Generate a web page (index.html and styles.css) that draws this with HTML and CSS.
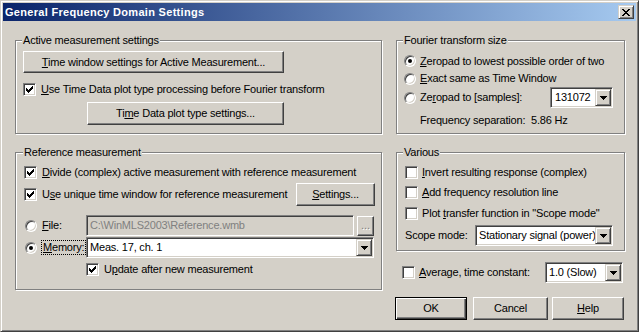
FILE: index.html
```html
<!DOCTYPE html>
<html>
<head>
<meta charset="utf-8">
<link rel="stylesheet" href="styles.css">
</head>
<body>
<div class="window">
  <div class="titlebar">
    <span class="title">General Frequency Domain Settings</span>
    <span class="close"><svg width="8" height="7" viewBox="0 0 8 7" shape-rendering="crispEdges"><path d="M0 0h2v1h-2z M6 0h2v1h-2z M1 1h2v1h-2z M5 1h2v1h-2z M2 2h4v1h-4z M3 3h2v1h-2z M2 4h4v1h-4z M1 5h2v1h-2z M5 5h2v1h-2z M0 6h2v1h-2z M6 6h2v1h-2z" fill="#000"/></svg></span>
  </div>
  <div class="content">
    <div class="col col-left">
      <div class="group g-active">
        <span class="legend">Active measurement settings</span>
        <div class="btn b-timewin"><span><u>T</u>ime window settings for Active Measurement...</span></div>
        <div class="row r13 r-usetime">
          <span class="cb"><svg width="7" height="7" viewBox="0 0 7 7" shape-rendering="crispEdges"><path d="M0 2h1v3h-1z M1 3h1v3h-1z M2 4h1v3h-1z M3 3h1v3h-1z M4 2h1v3h-1z M5 1h1v3h-1z M6 0h1v3h-1z" fill="#000"/></svg></span>
          <span class="txt"><u>U</u>se Time Data plot type processing before Fourier transform</span>
        </div>
        <div class="btn b-tdp"><span>Ti<u>m</u>e Data plot type settings...</span></div>
      </div>
      <div class="group g-ref">
        <span class="legend lg-ref">Reference measurement</span>
        <div class="row r13">
          <span class="cb"><svg width="7" height="7" viewBox="0 0 7 7" shape-rendering="crispEdges"><path d="M0 2h1v3h-1z M1 3h1v3h-1z M2 4h1v3h-1z M3 3h1v3h-1z M4 2h1v3h-1z M5 1h1v3h-1z M6 0h1v3h-1z" fill="#000"/></svg></span>
          <span class="txt"><u>D</u>ivide (complex) active measurement with reference measurement</span>
        </div>
        <div class="row r-unique">
          <span class="cb"><svg width="7" height="7" viewBox="0 0 7 7" shape-rendering="crispEdges"><path d="M0 2h1v3h-1z M1 3h1v3h-1z M2 4h1v3h-1z M3 3h1v3h-1z M4 2h1v3h-1z M5 1h1v3h-1z M6 0h1v3h-1z" fill="#000"/></svg></span>
          <span class="txt">U<u>s</u>e unique time window for reference measurement</span>
          <div class="btn b-settings"><span><u>S</u>ettings...</span></div>
        </div>
        <div class="row r-file">
          <div class="rlabel"><span class="rb"></span><span class="rtxt"><u>F</u>ile:</span></div>
          <div class="field"><span>C:\WinMLS2003\Reference.wmb</span></div>
          <div class="btn browse"><span>...</span></div>
        </div>
        <div class="row r-mem">
          <div class="rlabel"><span class="rb on"></span><span class="rtxt focus"><u>M</u>emory:</span></div>
          <div class="combo c-mem"><span class="val">Meas. 17, ch. 1</span><span class="dd"><svg width="7" height="4" viewBox="0 0 7 4" shape-rendering="crispEdges"><path d="M0 0h7v1h-1v1h-1v1h-1v1h-1v-1h-1v-1h-1v-1h-1z" fill="#000"/></svg></span></div>
        </div>
        <div class="row r13 r-update">
          <span class="cb"><svg width="7" height="7" viewBox="0 0 7 7" shape-rendering="crispEdges"><path d="M0 2h1v3h-1z M1 3h1v3h-1z M2 4h1v3h-1z M3 3h1v3h-1z M4 2h1v3h-1z M5 1h1v3h-1z M6 0h1v3h-1z" fill="#000"/></svg></span>
          <span class="txt">U<u>p</u>date after new measurement</span>
        </div>
      </div>
    </div>
    <div class="col col-right">
      <div class="group g-fourier">
        <span class="legend">Fourier transform size</span>
        <div class="row f1"><span class="rb on"></span><span class="rtxt2"><u>Z</u>eropad to lowest possible order of two</span></div>
        <div class="row f2"><span class="rb"></span><span class="rtxt2"><u>E</u>xact same as Time Window</span></div>
        <div class="row f3"><span class="rb"></span><span class="rtxt2">Ze<u>r</u>opad to [samples]:</span>
          <div class="combo c-samples"><span class="val">131072</span><span class="dd"><svg width="7" height="4" viewBox="0 0 7 4" shape-rendering="crispEdges"><path d="M0 0h7v1h-1v1h-1v1h-1v1h-1v-1h-1v-1h-1v-1h-1z" fill="#000"/></svg></span></div>
        </div>
        <div class="freq">Frequency separation:&nbsp; 5.86 Hz</div>
      </div>
      <div class="group g-various">
        <span class="legend">Various</span>
        <div class="row r13"><span class="cb"></span><span class="txt2"><u>I</u>nvert resulting response (complex)</span></div>
        <div class="row r13 v2"><span class="cb"></span><span class="txt2"><u>A</u>dd frequency resolution line</span></div>
        <div class="row r13 v3"><span class="cb"></span><span class="txt2">Plot <u>t</u>ransfer function in "Scope mode"</span></div>
        <div class="row r-scope"><span>Scope mode:</span>
          <div class="combo c-scope"><span class="val">Stationary signal (power)</span><span class="dd"><svg width="7" height="4" viewBox="0 0 7 4" shape-rendering="crispEdges"><path d="M0 0h7v1h-1v1h-1v1h-1v1h-1v-1h-1v-1h-1v-1h-1z" fill="#000"/></svg></span></div>
        </div>
      </div>
      <div class="row r-avg"><span class="cb"></span><span class="txt2"><u>A</u>verage, time constant:</span>
        <div class="combo c-avg"><span class="val">1.0 (Slow)</span><span class="dd"><svg width="7" height="4" viewBox="0 0 7 4" shape-rendering="crispEdges"><path d="M0 0h7v1h-1v1h-1v1h-1v1h-1v-1h-1v-1h-1v-1h-1z" fill="#000"/></svg></span></div>
      </div>
      <div class="row r-buttons">
        <div class="btn default b-ok"><span>OK</span></div>
        <div class="btn b-cancel"><span>Cancel</span></div>
        <div class="btn b-help"><span><u>H</u>elp</span></div>
      </div>
    </div>
  </div>
</div>
</body>
</html>
```
FILE: styles.css
```css
* { box-sizing: border-box; }
html, body { margin: 0; padding: 0; }
body {
  width: 639px; height: 332px; overflow: hidden;
  background: #D4D0C8;
  font-family: "Liberation Sans", Arial, sans-serif;
  font-size: 11px; letter-spacing: -0.2px; color: #000;
  line-height: 13px;
}
u { text-underline-offset: 1px; }
.window {
  width: 639px; height: 332px;
  background: #D4D0C8;
  border: 1px solid; border-color: #D4D0C8 #404040 #404040 #D4D0C8;
  box-shadow: inset 1px 1px 0 #fff, inset -1px -1px 0 #808080;
  padding: 2px;
  display: flex; flex-direction: column;
}
.titlebar {
  height: 18px; flex: none;
  background: linear-gradient(to right, #0A246A, #A6CAF0);
  display: flex; align-items: center;
  padding-left: 2px;
  color: #fff; font-weight: bold; letter-spacing: 0.3px;
}
.close {
  margin-left: auto; margin-right: 2px;
  width: 16px; height: 14px;
  display: flex; align-items: center; justify-content: center;
  background: #D4D0C8;
  border: 1px solid; border-color: #D4D0C8 #404040 #404040 #D4D0C8;
  box-shadow: inset 1px 1px 0 #fff, inset -1px -1px 0 #808080;
  padding-right: 1px;
}
.close svg { display: block; }
.content { display: flex; gap: 14px; padding: 19px 0 0 12px; }
.col { display: flex; flex-direction: column; }
.col-left { width: 367px; }
.col-right { width: 229px; }
.group {
  position: relative;
  border: 1px solid #808080;
  box-shadow: 1px 1px 0 #fff, inset 1px 1px 0 #fff;
}
.legend {
  position: absolute; top: -7px; left: 6px;
  padding: 0 1px; background: #D4D0C8;
  line-height: 13px; white-space: nowrap;
}
.lg-ref { left: 7px; }
.row { display: flex; align-items: center; white-space: nowrap; }
.r13 { height: 13px; }
.btn {
  display: flex; align-items: center; justify-content: center;
  background: #D4D0C8;
  border: 1px solid; border-color: #fff #404040 #404040 #fff;
  box-shadow: inset -1px -1px 0 #808080;
  white-space: nowrap; flex: none;
}
.btn.default {
  border-color: #000;
  box-shadow: inset 1px 1px 0 #fff, inset -1px -1px 0 #404040, inset -2px -2px 0 #808080;
}
.cb {
  width: 13px; height: 13px; flex: none;
  background: #fff;
  border: 1px solid; border-color: #808080 #fff #fff #808080;
  box-shadow: inset 1px 1px 0 #404040, inset -1px -1px 0 #D4D0C8;
  padding: 2px;
}
.cb svg { display: block; }
.rb {
  width: 12px; height: 12px; flex: none; position: relative;
  border-radius: 50%; background: #fff;
  border: 1px solid; border-color: #808080 #fff #fff #808080;
  box-shadow: inset 1px 1px 0 #404040, inset -1px -1px 0 #D4D0C8;
}
.rb.on::after {
  content: ""; position: absolute; left: 3px; top: 3px;
  width: 4px; height: 4px; border-radius: 50%; background: #000;
}
.txt { margin-left: 5px; }
.txt2 { margin-left: 4px; }
.rtxt2 { margin-left: 4px; }
.combo {
  display: flex; height: 21px; flex: none;
  background: #fff; padding: 1px;
  border: 1px solid; border-color: #808080 #fff #fff #808080;
  box-shadow: inset 1px 1px 0 #404040, inset -1px -1px 0 #D4D0C8;
}
.combo .val { flex: 1; padding-left: 2px; line-height: 17px; overflow: hidden; }
.combo .dd {
  width: 16px; height: 17px; flex: none;
  display: flex; align-items: center; justify-content: center;
  background: #D4D0C8;
  border: 1px solid; border-color: #D4D0C8 #404040 #404040 #D4D0C8;
  box-shadow: inset 1px 1px 0 #fff, inset -1px -1px 0 #808080;
}
.combo .dd svg { display: block; }

/* Active */
.g-active { height: 94px; padding: 10px 0 0 7px; }
.b-timewin { width: 261px; height: 22px; }
.r-usetime { margin-top: 10px; }
.b-tdp { margin-top: 6px; margin-left: 64px; width: 197px; height: 23px; }

/* Reference */
.g-ref { height: 138px; margin-top: 18px; padding: 13px 6px 0 8px; }
.r-unique { margin-top: 4px; height: 23px; }
.b-settings { margin-left: auto; width: 79px; height: 23px; }
.r-file { margin-top: 9px; height: 21px; }
.rlabel { width: 62px; flex: none; display: flex; align-items: center; }
.rlabel .rb { margin-left: 1px; }
.rtxt { margin-left: 5px; }
.rtxt.focus { margin-left: 4px; border: 1px dotted #000; padding: 0 1px; line-height: 13px; }
.field {
  width: 268px; height: 21px; flex: none;
  display: flex; align-items: center; padding-left: 3px;
  background: #D4D0C8; color: #808080;
  border: 1px solid; border-color: #808080 #fff #fff #808080;
  box-shadow: inset 1px 1px 0 #404040, inset -1px -1px 0 #D4D0C8;
}
.browse {
  margin-left: 3px; width: 17px; height: 20px;
  color: #808080; text-shadow: 1px 1px 0 #fff;
  align-items: flex-end; padding-bottom: 3px; letter-spacing: 0;
}
.r-mem { margin-top: 1px; height: 21px; }
.c-mem { width: 288px; }
.r-update { margin-top: 5px; margin-left: 62px; }

/* Fourier */
.g-fourier { height: 94px; padding: 11px 11px 0 7px; }
.f1 { height: 18px; }
.f2 { height: 17px; }
.f3 { height: 21px; }
.c-samples { margin-left: auto; width: 63px; }
.c-samples .val { padding-left: 3px; }
.freq { margin-top: 6px; margin-left: 16px; height: 13px; white-space: nowrap; }

/* Various */
.g-various { height: 99px; margin-top: 18px; padding: 13px 11px 0 8px; }
.v2 { margin-top: 7px; }
.v3 { margin-top: 8px; }
.r-scope { margin-top: 5px; height: 21px; }
.c-scope { margin-left: auto; width: 138px; }

/* Average + buttons */
.r-avg { margin-top: 11px; height: 21px; }
.r-avg .cb { margin-left: 6px; }
.c-avg { margin-left: auto; margin-right: 2px; width: 78px; }
.r-buttons { margin-top: 14px; margin-left: -1px; }
.r-buttons .btn { height: 23px; }
.b-ok { width: 72px; }
.b-cancel { width: 75px; margin-left: 6px; }
.b-help { width: 72px; margin-left: 4px; }
```
